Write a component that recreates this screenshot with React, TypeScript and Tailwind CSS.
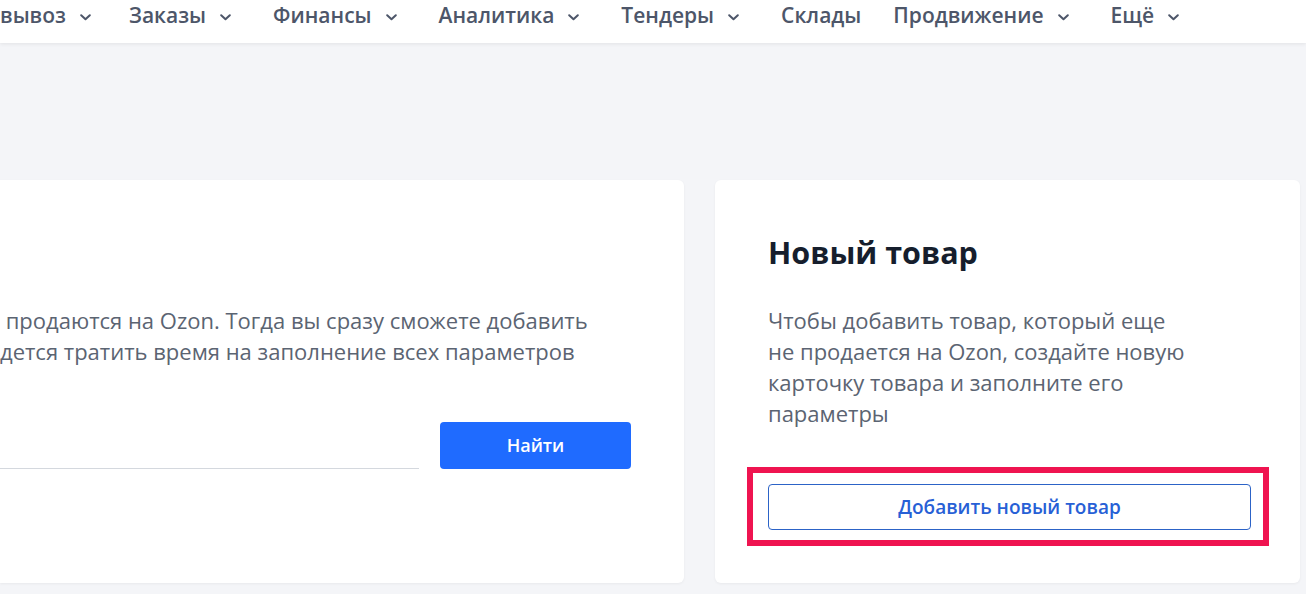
import React from "react";

const font = { fontFamily: '"Open Sans", "Noto Sans", sans-serif' };

function Chevron() {
  return (
    <svg width="11" height="7" viewBox="0 0 11 7" className="ml-[14px] mr-[10px] mt-[2px]" fill="none">
      <path d="M1.2 1.2 L5.5 5.3 L9.8 1.2" stroke="#4d5669" strokeWidth="2" strokeLinecap="round" strokeLinejoin="round" />
    </svg>
  );
}

const navItems: { label: string; chevron: boolean }[] = [
  { label: "вывоз", chevron: true },
  { label: "Заказы", chevron: true },
  { label: "Финансы", chevron: true },
  { label: "Аналитика", chevron: true },
  { label: "Тендеры", chevron: true },
  { label: "Склады", chevron: false },
  { label: "Продвижение", chevron: true },
  { label: "Ещё", chevron: true },
];

export default function App() {
  return (
    <div className="w-[1306px] h-[594px] overflow-hidden bg-[#f4f5f8]" style={font}>
      <header className="h-[43px] bg-white shadow-[0_1px_4px_rgba(0,0,0,0.08)] flex items-center relative z-10">
        <nav className="flex items-center h-full pb-[11px]">
          {navItems.map((it, i) => (
            <div
              key={it.label}
              className={`flex items-center text-[21px] font-semibold text-[#4d5669] ${i === 0 ? "pr-[12px]" : "px-[16px]"}`}
            >
              <span>{it.label}</span>
              {it.chevron && <Chevron />}
            </div>
          ))}
        </nav>
      </header>

      <main className="flex gap-[31px] pt-[137px] pr-[6px]">
        <section className="flex-1 h-[403px] bg-white rounded-r-[6px] shadow-[0_1px_3px_rgba(0,0,0,0.05)] flex flex-col">
          <div className="pt-[125px] pr-[53px]">
            <p className="text-[22px] leading-[31px] text-[#5b6472] whitespace-nowrap">
              <span>&nbsp;продаются на Ozon. Тогда вы сразу сможете добавить</span>
              <br />
              <span>дется тратить время на заполнение всех параметров</span>
            </p>
            <div className="flex items-end mt-[55px]">
              <div className="flex-1 h-[47px] border-b border-[#d4d8de]" />
              <button className="ml-[21px] w-[191px] h-[47px] rounded-[4px] bg-[#1f6bff] text-white text-[18px] font-semibold">
                Найти
              </button>
            </div>
          </div>
        </section>

        <section className="w-[585px] h-[403px] bg-white rounded-[6px] shadow-[0_1px_3px_rgba(0,0,0,0.05)] pl-[53px] pr-[49px] pt-[54px]">
          <h2 className="text-[30.5px] leading-[36px] font-bold text-[#161e2d]">Новый товар</h2>
          <p className="mt-[35px] text-[22px] leading-[31px] text-[#5b6472] whitespace-nowrap">
            Чтобы добавить товар, который еще
            <br />
            не продается на Ozon, создайте новую
            <br />
            карточку товара и заполните его
            <br />
            параметры
          </p>
          <div className="relative mt-[55px]">
            <button className="w-full h-[46px] rounded-[4px] border border-[#2c63c7] text-[#2760d6] text-[19px] font-semibold">
              Добавить новый товар
            </button>
            <div className="absolute left-[-21px] right-[-18px] top-[-17px] bottom-[-16px] border-[6px] border-[#ef1450] pointer-events-none" />
          </div>
        </section>
      </main>
    </div>
  );
}
